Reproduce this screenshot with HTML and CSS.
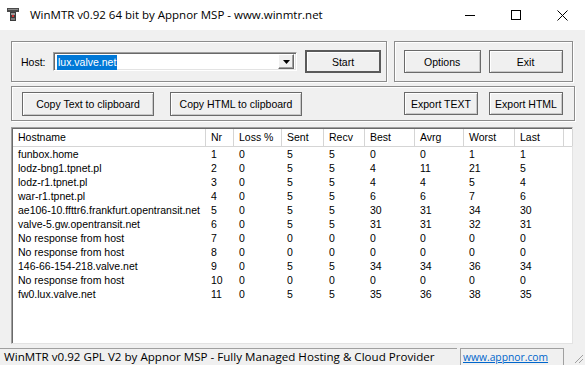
FILE: index.html
```html
<!DOCTYPE html>
<html lang="en">
<head>
    <meta charset="UTF-8">
    <title>WinMTR v0.92 64 bit by Appnor MSP</title>
    <link rel="stylesheet" href="styles.css">
</head>
<body>
    <!-- Window title bar -->
    <header class="titlebar">
        <svg class="app-icon" width="12" height="13" viewBox="0 0 12 13">
            <rect x="0" y="0" width="12" height="4" fill="#4a4a4a"/>
            <rect x="1" y="1" width="10" height="1" fill="#8a8a8a"/>
            <rect x="3" y="4" width="6" height="9" fill="#3c3c3c"/>
            <rect x="4" y="5" width="4" height="2" fill="#9a9a9a"/>
            <rect x="5" y="7" width="2" height="2" fill="#d23030"/>
            <rect x="4" y="10" width="4" height="2" fill="#7a7a7a"/>
        </svg>
        <span class="title">WinMTR v0.92 64 bit by Appnor MSP - www.winmtr.net</span>
        <div class="caption">
            <span class="cap-btn">
                <svg width="10" height="10" viewBox="0 0 10 10"><path d="M0 5.5h10" stroke="#000" stroke-width="1"/></svg>
            </span>
            <span class="cap-btn">
                <svg width="10" height="10" viewBox="0 0 10 10"><rect x="0.5" y="0.5" width="9" height="9" fill="none" stroke="#000" stroke-width="1"/></svg>
            </span>
            <span class="cap-btn">
                <svg width="11" height="11" viewBox="0 0 11 11"><path d="M0.5 0.5l10 10M10.5 0.5l-10 10" stroke="#000" stroke-width="1"/></svg>
            </span>
        </div>
    </header>

    <main class="client">
        <div class="top-row">
            <div class="group host-group">
                <span class="host-label">Host:</span>
                <div class="combo">
                    <span class="combo-text"><span class="sel">lux.valve.net</span></span>
                    <span class="combo-drop">
                        <svg width="7" height="4" viewBox="0 0 7 4"><path d="M0 0h7L3.5 4z" fill="#000"/></svg>
                    </span>
                </div>
                <button class="btn btn-start">Start</button>
            </div>
            <div class="group options-group">
                <button class="btn btn-options">Options</button>
                <button class="btn btn-exit">Exit</button>
            </div>
        </div>

        <div class="group export-group">
            <button class="btn btn-copy">Copy Text to clipboard</button>
            <button class="btn btn-copy">Copy HTML to clipboard</button>
            <span class="spacer"></span>
            <button class="btn btn-export">Export TEXT</button>
            <button class="btn btn-export-html">Export HTML</button>
        </div>

        <!-- Results list -->
        <div class="list">
            <div class="list-head">
                <span>Hostname</span><span>Nr</span><span>Loss %</span><span>Sent</span><span>Recv</span><span>Best</span><span>Avrg</span><span>Worst</span><span>Last</span><span></span>
            </div>
            <div class="list-body" id="rows"></div>
        </div>
    </main>

    <footer class="statusbar">
        <span class="panel panel-main">WinMTR v0.92 GPL V2 by Appnor MSP - Fully Managed Hosting &amp; Cloud Provider</span>
        <span class="panel panel-link"><a href="#">www.appnor.com</a></span>
        <svg class="grip" width="12" height="12" viewBox="0 0 12 12">
            <path d="M11 3L3 11M11 7L7 11" stroke="#a0a0a0" stroke-width="1"/>
        </svg>
    </footer>

    <script>
        const hops = [
            ['funbox.home', 1, 0, 5, 5, 0, 0, 1, 1],
            ['lodz-bng1.tpnet.pl', 2, 0, 5, 5, 4, 11, 21, 5],
            ['lodz-r1.tpnet.pl', 3, 0, 5, 5, 4, 4, 5, 4],
            ['war-r1.tpnet.pl', 4, 0, 5, 5, 6, 6, 7, 6],
            ['ae106-10.ffttr6.frankfurt.opentransit.net', 5, 0, 5, 5, 30, 31, 34, 30],
            ['valve-5.gw.opentransit.net', 6, 0, 5, 5, 31, 31, 32, 31],
            ['No response from host', 7, 0, 0, 0, 0, 0, 0, 0],
            ['No response from host', 8, 0, 0, 0, 0, 0, 0, 0],
            ['146-66-154-218.valve.net', 9, 0, 5, 5, 34, 34, 36, 34],
            ['No response from host', 10, 0, 0, 0, 0, 0, 0, 0],
            ['fw0.lux.valve.net', 11, 0, 5, 5, 35, 36, 38, 35]
        ];

        const rows = document.getElementById('rows');
        hops.forEach(hop => {
            const row = document.createElement('div');
            row.className = 'list-row';
            hop.forEach(value => {
                const cell = document.createElement('span');
                cell.textContent = value;
                row.appendChild(cell);
            });
            rows.appendChild(row);
        });
    </script>
</body>
</html>
```

FILE: styles.css
```css
* {
    margin: 0;
    padding: 0;
    box-sizing: border-box;
}

body {
    width: 585px;
    height: 365px;
    overflow: hidden;
    background: #f0f0f0;
    font-family: 'Liberation Sans', Arial, sans-serif;
    font-size: 10.5px;
    color: #000;
    display: flex;
    flex-direction: column;
}

/* Title bar */
.titlebar {
    height: 30px;
    background: #fff;
    display: flex;
    align-items: center;
}

.app-icon {
    margin-left: 7px;
    margin-top: -1px;
}

.title {
    margin-left: 11px;
    font-family: 'Open Sans', 'Noto Sans', sans-serif;
    font-size: 11.5px;
    margin-top: -1px;
}

.caption {
    margin-left: auto;
    display: flex;
    height: 30px;
}

.cap-btn {
    width: 46px;
    display: flex;
    justify-content: center;
    align-items: center;
}

/* Client area */
.client {
    padding: 11px 12px 0 11px;
    display: flex;
    flex-direction: column;
}

.top-row {
    display: flex;
    gap: 7px;
}

.group {
    border: 1px solid #8c8c8c;
    box-shadow: inset 1px 1px #fff, 1px 1px #fff;
    display: flex;
    align-items: center;
}

.host-group {
    width: 377px;
    height: 41px;
    padding-left: 9px;
}

.options-group {
    width: 180px;
    height: 41px;
    padding-left: 9px;
    gap: 8px;
}

.export-group {
    margin-top: 4px;
    height: 35px;
    width: 564px;
    padding: 0 11px 0 10px;
    gap: 16px;
}

.export-group .spacer {
    flex: 1;
}

.host-label {
    width: 32px;
}

.combo {
    width: 244px;
    height: 19px;
    background: #fff;
    border: 1px solid;
    border-color: #a0a0a0 #fff #fff #a0a0a0;
    box-shadow: inset 1px 1px #696969, inset -1px -1px #e3e3e3;
    display: flex;
    align-items: center;
    padding: 2px;
}

.combo-text {
    flex: 1;
    padding-left: 1px;
}

.sel {
    background: #0078d7;
    color: #fff;
    padding: 1px 1px 2px 1px;
}

.combo-drop {
    width: 16px;
    height: 15px;
    background: #f0f0f0;
    border: 1px solid;
    border-color: #fff #696969 #696969 #fff;
    box-shadow: inset -1px -1px #a0a0a0;
    display: flex;
    justify-content: center;
    align-items: center;
}

.btn {
    height: 23px;
    font-family: inherit;
    font-size: inherit;
    color: #000;
    background: #f0f0f0;
    border: 1px solid #6a6a6a;
    box-shadow: inset 1px 1px #fff, inset -1px -1px #c8c8c8;
}

.btn-start {
    width: 76px;
    margin-left: 8px;
    border: 2px solid #5a5a5a;
    box-shadow: inset 1px 1px #fff;
}

.btn-options {
    width: 77px;
}

.btn-exit {
    width: 74px;
}

.btn-copy {
    width: 132px;
    height: 24px;
}

.btn-export {
    width: 74px;
    margin-right: -5px;
}

.btn-export-html {
    width: 74px;
}

/* Results list */
.list {
    margin-top: 6px;
    width: 562px;
    height: 217px;
    background: #fff;
    border: 1px solid;
    border-color: #a0a0a0 #e3e3e3 #e3e3e3 #a0a0a0;
    box-shadow: inset 1px 1px #696969;
    padding: 1px 0 0 1px;
}

.list-head,
.list-row {
    display: grid;
    grid-template-columns: 193px 28px 48px 42px 41px 50px 49px 51px 49px 9px;
}

.list-head {
    height: 18px;
    border-bottom: 1px solid #d5d5d5;
}

.list-head span {
    border-right: 1px solid #d5d5d5;
    padding-left: 5px;
    line-height: 17px;
}

.list-row {
    height: 14px;
    line-height: 14px;
}

.list-row span {
    padding-left: 5px;
    white-space: nowrap;
}

/* Status bar */
.statusbar {
    margin-top: 4px;
    height: 17px;
    display: flex;
    font-family: 'Open Sans', 'Noto Sans', sans-serif;
    font-size: 11.6px;
    position: relative;
}

.panel {
    border-top: 1px solid #a0a0a0;
    border-left: 1px solid #a0a0a0;
    line-height: 16px;
    white-space: nowrap;
}

.panel-main {
    width: 457px;
    padding-left: 4px;
    border-left: none;
}

.panel-link {
    width: 104px;
    margin-left: 3px;
    padding-left: 2px;
    border-right: 1px solid #a0a0a0;
}

.panel-link a {
    color: #0066cc;
    font-size: 10.3px;
}

.grip {
    position: absolute;
    right: 1px;
    bottom: 1px;
}
```
